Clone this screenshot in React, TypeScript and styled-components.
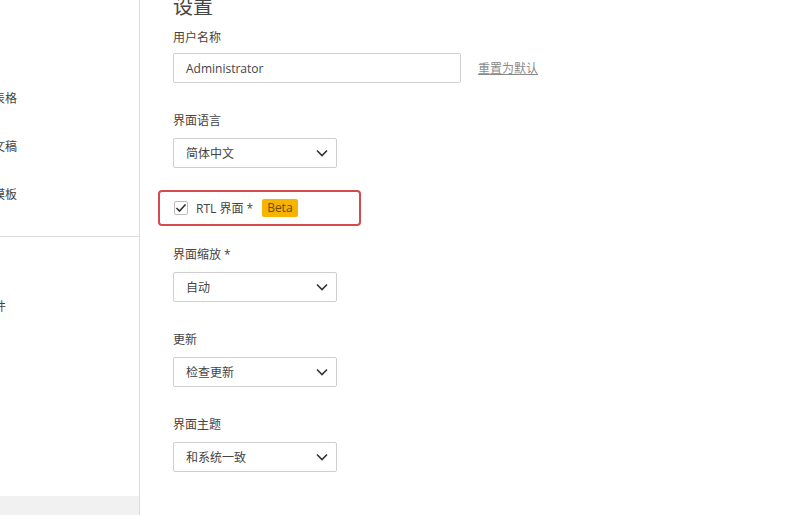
import React from "react";
import styled, { createGlobalStyle } from "styled-components";

const Global = createGlobalStyle`
  html, body { margin: 0; padding: 0; background: #fff; overflow: hidden; }
  body { font-family: "Open Sans", "Noto Sans CJK SC", sans-serif; color: #444; }
`;

const Shell = styled.div`
  display: flex;
  width: 800px;
  height: 515px;
  overflow: hidden;
  font-size: 12px;
`;

const Sidebar = styled.aside`
  width: 139px;
  flex: none;
  border-right: 1px solid #dcdcdc;
  display: flex;
  flex-direction: column;
  overflow: hidden;
`;

const NavSection = styled.div<{ $top: number; $bottom?: number; $bordered?: boolean; $grow?: boolean }>`
  padding-top: ${(p) => p.$top}px;
  padding-bottom: ${(p) => p.$bottom ?? 0}px;
  ${(p) => (p.$bordered ? "border-bottom: 1px solid #dcdcdc;" : "")}
  ${(p) => (p.$grow ? "flex: 1;" : "")}
`;

const NavItem = styled.div<{ $shift: number }>`
  height: 48px;
  display: flex;
  align-items: center;
  white-space: nowrap;
  margin-left: ${(p) => -p.$shift}px;
  color: #444;
  font-size: 12px;
`;

const SideFooter = styled.div`
  height: 19px;
  background: #f1f1f1;
`;

const Main = styled.main`
  flex: 1;
  padding-left: 33px;
  display: flex;
  flex-direction: column;
  align-items: flex-start;
`;

const Title = styled.h1`
  margin: -5px 0 0 0;
  font-size: 20px;
  line-height: 24px;
  font-weight: 400;
  color: #444;
`;

const Label = styled.div<{ $gap: number }>`
  margin-top: ${(p) => p.$gap}px;
  line-height: 16px;
  font-size: 12px;
  color: #444;
`;

const Row = styled.div`
  margin-top: 7px;
  display: flex;
  align-items: center;
  gap: 17px;
`;

const TextInput = styled.div`
  box-sizing: border-box;
  width: 288px;
  height: 30px;
  border: 1px solid #cfcfcf;
  border-radius: 2px;
  padding: 0 12px;
  display: flex;
  align-items: center;
  color: #444;
`;

const ResetLink = styled.a`
  color: #8a8a8a;
  text-decoration: underline;
  font-size: 12px;
`;

const Select = styled.div`
  margin-top: 9px;
  box-sizing: border-box;
  width: 164px;
  height: 30px;
  border: 1px solid #cfcfcf;
  border-radius: 2px;
  padding: 0 8px 0 12px;
  display: flex;
  align-items: center;
  justify-content: space-between;
  color: #444;
`;

const Highlight = styled.div`
  margin-top: 22px;
  margin-left: -15px;
  box-sizing: border-box;
  width: 203px;
  height: 36px;
  border: 2px solid #d44a4f;
  border-radius: 4px;
  padding-left: 14px;
  display: flex;
  align-items: center;
  gap: 8px;
`;

const Check = styled.span`
  box-sizing: border-box;
  width: 14px;
  height: 14px;
  border: 1px solid #bdbdbd;
  border-radius: 2px;
  display: flex;
  align-items: center;
  justify-content: center;
`;

const Badge = styled.span`
  margin-left: 1px;
  background: #f6b300;
  color: #6b4a00;
  border-radius: 2px;
  padding: 0 5px;
  height: 18px;
  line-height: 18px;
  font-size: 12px;
`;

const Chevron = () => (
  <svg width="12" height="8" viewBox="0 0 12 8">
    <polyline points="1,1.5 6,6.5 11,1.5" fill="none" stroke="#333" strokeWidth="1.6" />
  </svg>
);

const Field = ({ label, value, gap = 30 }: { label: string; value: string; gap?: number }) => (
  <>
    <Label $gap={gap}>{label}</Label>
    <Select>
      <span>{value}</span>
      <Chevron />
    </Select>
  </>
);

export default function App() {
  return (
    <Shell>
      <Global />
      <Sidebar>
        <NavSection $top={74} $bottom={18} $bordered>
          <NavItem $shift={31}>电子表格</NavItem>
          <NavItem $shift={31}>演示文稿</NavItem>
          <NavItem $shift={31}>表单模板</NavItem>
        </NavSection>
        <NavSection $top={45} $grow>
          <NavItem $shift={42}>本地文件</NavItem>
        </NavSection>
        <SideFooter />
      </Sidebar>
      <Main>
        <Title>设置</Title>
        <Label $gap={11}>用户名称</Label>
        <Row>
          <TextInput>Administrator</TextInput>
          <ResetLink>重置为默认</ResetLink>
        </Row>
        <Field label="界面语言" value="简体中文" />
        <Highlight>
          <Check>
            <svg width="12" height="10" viewBox="0 0 12 10">
              <polyline points="1.5,5 4.5,8 10.5,1.5" fill="none" stroke="#333" strokeWidth="1.6" />
            </svg>
          </Check>
          <span>RTL 界面 *</span>
          <Badge>Beta</Badge>
        </Highlight>
        <Field label="界面缩放 *" value="自动" gap={21} />
        <Field label="更新" value="检查更新" />
        <Field label="界面主题" value="和系统一致" />
      </Main>
    </Shell>
  );
}
